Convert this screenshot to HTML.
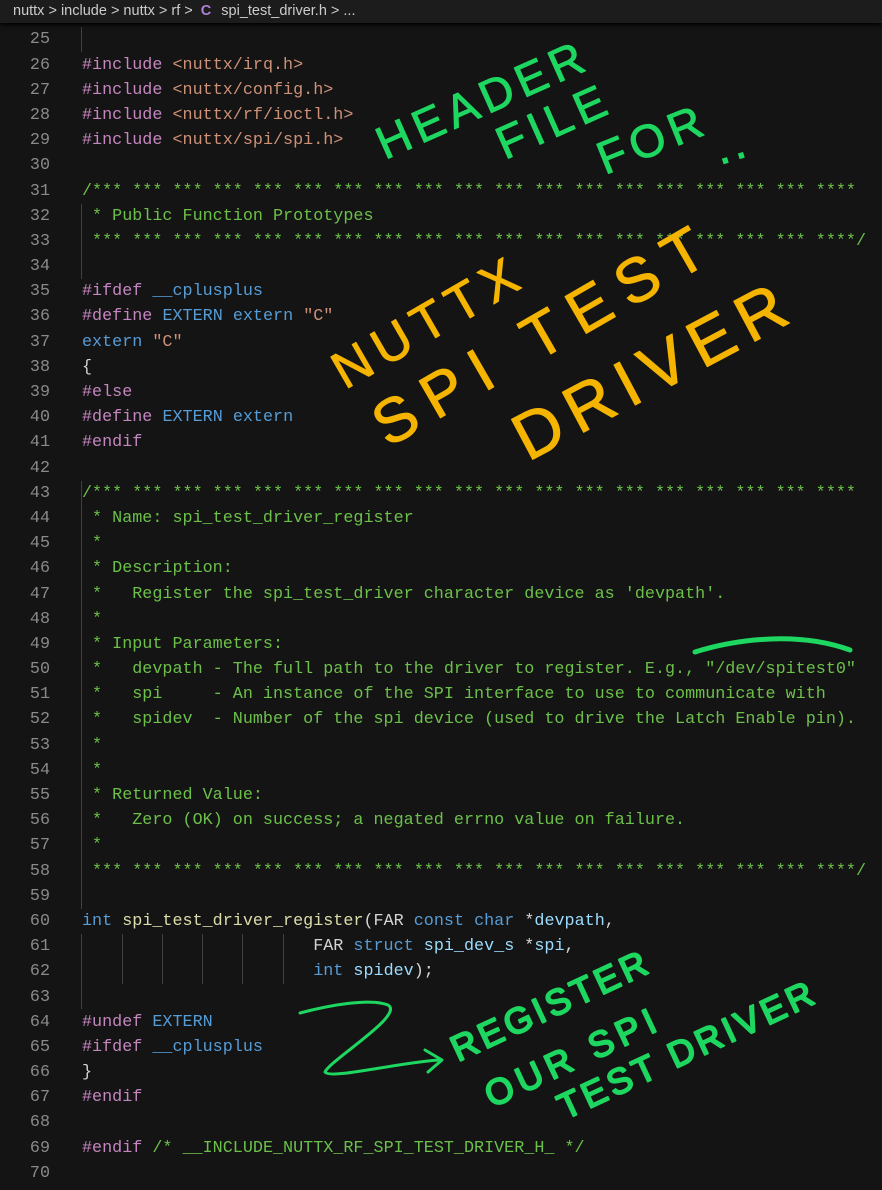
<!DOCTYPE html>
<html><head><meta charset="utf-8"><style>
html,body{margin:0;padding:0;background:#141414;width:882px;height:1190px;overflow:hidden}
.bar{position:absolute;left:0;top:0;width:882px;height:23px;background:#1c1c1c;color:#cccccc;font:14.5px "Liberation Sans",sans-serif;line-height:23px;padding-left:13px;box-sizing:border-box;box-shadow:0 2px 4px #000;z-index:2}
.bar .c{color:#b180d7;font-weight:bold;margin:0 6px 0 4px}
.code{position:absolute;left:0;top:27.4px;width:882px;font:16.75px "Liberation Mono",monospace;color:#d4d4d4}
.l{height:25.2px;line-height:25.2px;position:relative}
.n{position:absolute;left:0;width:50px;text-align:right;color:#8a8a8a}
.t{position:absolute;left:82px;white-space:pre}
.k{color:#c586c0}.s{color:#ce9178}.g{color:#6cc04a}.b{color:#569cd6}.y{color:#dcdcaa}.v{color:#9cdcfe}
.gd{position:absolute;width:1px;background:#404040}
</style></head><body>
<div class="bar">nuttx &gt; include &gt; nuttx &gt; rf &gt; <span class="c">C</span> spi_test_driver.h &gt; ...</div>
<div class="gd" style="left:81px;top:27px;height:25px"></div>
<div class="gd" style="left:81px;top:204px;height:75px"></div>
<div class="gd" style="left:81px;top:481px;height:25px"></div>
<div class="gd" style="left:81px;top:506px;height:378px"></div>
<div class="gd" style="left:81px;top:884px;height:25px"></div>
<div class="gd" style="left:81px;top:934px;height:75px"></div>
<div class="gd" style="left:122px;top:934px;height:50px"></div>
<div class="gd" style="left:162px;top:934px;height:50px"></div>
<div class="gd" style="left:202px;top:934px;height:50px"></div>
<div class="gd" style="left:242px;top:934px;height:50px"></div>
<div class="gd" style="left:283px;top:934px;height:50px"></div>
<div class="code"><div class="l"><span class="n">25</span><span class="t"></span></div><div class="l"><span class="n">26</span><span class="t"><span class="k">#include</span> <span class="s">&lt;nuttx/irq.h&gt;</span></span></div><div class="l"><span class="n">27</span><span class="t"><span class="k">#include</span> <span class="s">&lt;nuttx/config.h&gt;</span></span></div><div class="l"><span class="n">28</span><span class="t"><span class="k">#include</span> <span class="s">&lt;nuttx/rf/ioctl.h&gt;</span></span></div><div class="l"><span class="n">29</span><span class="t"><span class="k">#include</span> <span class="s">&lt;nuttx/spi/spi.h&gt;</span></span></div><div class="l"><span class="n">30</span><span class="t"></span></div><div class="l"><span class="n">31</span><span class="t g">/*** *** *** *** *** *** *** *** *** *** *** *** *** *** *** *** *** *** ****</span></div><div class="l"><span class="n">32</span><span class="t g"> * Public Function Prototypes</span></div><div class="l"><span class="n">33</span><span class="t g"> *** *** *** *** *** *** *** *** *** *** *** *** *** *** *** *** *** *** ****/</span></div><div class="l"><span class="n">34</span><span class="t"></span></div><div class="l"><span class="n">35</span><span class="t"><span class="k">#ifdef</span> <span class="b">__cplusplus</span></span></div><div class="l"><span class="n">36</span><span class="t"><span class="k">#define</span> <span class="b">EXTERN</span> <span class="b">extern</span> <span class="s">"C"</span></span></div><div class="l"><span class="n">37</span><span class="t"><span class="b">extern</span> <span class="s">"C"</span></span></div><div class="l"><span class="n">38</span><span class="t">{</span></div><div class="l"><span class="n">39</span><span class="t"><span class="k">#else</span></span></div><div class="l"><span class="n">40</span><span class="t"><span class="k">#define</span> <span class="b">EXTERN</span> <span class="b">extern</span></span></div><div class="l"><span class="n">41</span><span class="t"><span class="k">#endif</span></span></div><div class="l"><span class="n">42</span><span class="t"></span></div><div class="l"><span class="n">43</span><span class="t g">/*** *** *** *** *** *** *** *** *** *** *** *** *** *** *** *** *** *** ****</span></div><div class="l"><span class="n">44</span><span class="t g"> * Name: spi_test_driver_register</span></div><div class="l"><span class="n">45</span><span class="t g"> *</span></div><div class="l"><span class="n">46</span><span class="t g"> * Description:</span></div><div class="l"><span class="n">47</span><span class="t g"> *   Register the spi_test_driver character device as 'devpath'.</span></div><div class="l"><span class="n">48</span><span class="t g"> *</span></div><div class="l"><span class="n">49</span><span class="t g"> * Input Parameters:</span></div><div class="l"><span class="n">50</span><span class="t g"> *   devpath - The full path to the driver to register. E.g., "/dev/spitest0"</span></div><div class="l"><span class="n">51</span><span class="t g"> *   spi     - An instance of the SPI interface to use to communicate with</span></div><div class="l"><span class="n">52</span><span class="t g"> *   spidev  - Number of the spi device (used to drive the Latch Enable pin).</span></div><div class="l"><span class="n">53</span><span class="t g"> *</span></div><div class="l"><span class="n">54</span><span class="t g"> *</span></div><div class="l"><span class="n">55</span><span class="t g"> * Returned Value:</span></div><div class="l"><span class="n">56</span><span class="t g"> *   Zero (OK) on success; a negated errno value on failure.</span></div><div class="l"><span class="n">57</span><span class="t g"> *</span></div><div class="l"><span class="n">58</span><span class="t g"> *** *** *** *** *** *** *** *** *** *** *** *** *** *** *** *** *** *** ****/</span></div><div class="l"><span class="n">59</span><span class="t"></span></div><div class="l"><span class="n">60</span><span class="t"><span class="b">int</span> <span class="y">spi_test_driver_register</span>(FAR <span class="b">const</span> <span class="b">char</span> *<span class="v">devpath</span>,</span></div><div class="l"><span class="n">61</span><span class="t">                       FAR <span class="b">struct</span> <span class="v">spi_dev_s</span> *<span class="v">spi</span>,</span></div><div class="l"><span class="n">62</span><span class="t">                       <span class="b">int</span> <span class="v">spidev</span>);</span></div><div class="l"><span class="n">63</span><span class="t"></span></div><div class="l"><span class="n">64</span><span class="t"><span class="k">#undef</span> <span class="b">EXTERN</span></span></div><div class="l"><span class="n">65</span><span class="t"><span class="k">#ifdef</span> <span class="b">__cplusplus</span></span></div><div class="l"><span class="n">66</span><span class="t">}</span></div><div class="l"><span class="n">67</span><span class="t"><span class="k">#endif</span></span></div><div class="l"><span class="n">68</span><span class="t"></span></div><div class="l"><span class="n">69</span><span class="t"><span class="k">#endif</span> <span class="g">/* __INCLUDE_NUTTX_RF_SPI_TEST_DRIVER_H_ */</span></span></div><div class="l"><span class="n">70</span><span class="t"></span></div></div>
<svg width="882" height="1190" style="position:absolute;left:0;top:0" font-family="Liberation Sans, sans-serif">
<g fill="none" stroke-linecap="round" stroke-linejoin="round">
<g font-size="46" stroke="#1ed760" stroke-width="1" fill="#1ed760">
<text transform="translate(385,160) rotate(-24)" letter-spacing="6">HEADER</text>
<text transform="translate(505,160) rotate(-24)" letter-spacing="6">FILE</text>
<text transform="translate(605,175) rotate(-22)" letter-spacing="6">FOR</text>
<text transform="translate(720,165) rotate(-18)" letter-spacing="4">..</text>
</g>
<g stroke="#f5b400" fill="#f5b400" stroke-width="1">
<text font-size="52" transform="translate(345,390) rotate(-30)" letter-spacing="8">NUTTX</text>
<text font-size="62" transform="translate(388,448) rotate(-30)" letter-spacing="14">SPI TEST</text>
<text font-size="66" transform="translate(528,462) rotate(-28)" letter-spacing="10">DRIVER</text>
</g>
<path d="M695 652 C740 638 800 632 850 650" stroke="#1ed760" stroke-width="5"/>
<path d="M300 1013 C330 1005 370 998 388 1005 C405 1015 330 1060 325 1072 C330 1080 400 1062 440 1060 M425 1050 L442 1060 L428 1072" stroke="#1ed760" stroke-width="3"/>
<g font-size="36" stroke="#1ed760" fill="#1ed760" stroke-width="2">
<text transform="translate(458,1062) rotate(-25)" letter-spacing="4">REGISTER</text>
<text transform="translate(492,1108) rotate(-25)" letter-spacing="6">OUR  SPI</text>
<text transform="translate(565,1120) rotate(-25)" letter-spacing="4">TEST DRIVER</text>
</g>
</g>
</svg>
</body></html>
